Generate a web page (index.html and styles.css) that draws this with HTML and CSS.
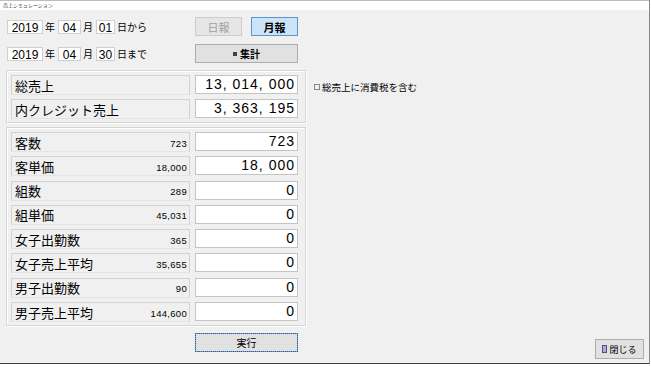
FILE: index.html
```html
<!DOCTYPE html>
<html lang="ja">
<head>
    <meta charset="UTF-8">
    <title>売上シミュレーション</title>
    <link rel="stylesheet" href="styles.css">
</head>
<body>
    <div class="janela">
        <div class="titulo">売上シミュレーション</div>

        <div class="conteudo">
            <div class="coluna-esq">
                <div class="datas">
                    <div class="campos-data">
                        <span class="caixa ano">2019</span><span class="unidade">年</span>
                        <span class="caixa mes">04</span><span class="unidade">月</span>
                        <span class="caixa dia">01</span><span class="unidade">日から</span>
                    </div>
                    <div class="botoes">
                        <button class="btn btn-pequeno desativado">日報</button>
                        <button class="btn btn-pequeno ativo">月報</button>
                    </div>
                    <div class="campos-data">
                        <span class="caixa ano">2019</span><span class="unidade">年</span>
                        <span class="caixa mes">04</span><span class="unidade">月</span>
                        <span class="caixa dia">30</span><span class="unidade">日まで</span>
                    </div>
                    <div class="botoes">
                        <button class="btn btn-largo"><span class="icone-quadrado"></span>集計</button>
                    </div>
                </div>

                <div class="grupo grupo-total">
                    <div class="linha">
                        <div class="rotulo">総売上</div>
                        <div class="valor">13, 014, 000</div>
                    </div>
                    <div class="linha">
                        <div class="rotulo">内クレジット売上</div>
                        <div class="valor">3, 363, 195</div>
                    </div>
                </div>

                <div class="grupo grupo-detalhe">
                    <div class="linha">
                        <div class="rotulo">客数<span class="ref">723</span></div>
                        <div class="valor">723</div>
                    </div>
                    <div class="linha">
                        <div class="rotulo">客単価<span class="ref">18,000</span></div>
                        <div class="valor">18, 000</div>
                    </div>
                    <div class="linha">
                        <div class="rotulo">組数<span class="ref">289</span></div>
                        <div class="valor">0</div>
                    </div>
                    <div class="linha">
                        <div class="rotulo">組単価<span class="ref">45,031</span></div>
                        <div class="valor">0</div>
                    </div>
                    <div class="linha">
                        <div class="rotulo">女子出勤数<span class="ref">365</span></div>
                        <div class="valor">0</div>
                    </div>
                    <div class="linha">
                        <div class="rotulo">女子売上平均<span class="ref">35,655</span></div>
                        <div class="valor">0</div>
                    </div>
                    <div class="linha">
                        <div class="rotulo">男子出勤数<span class="ref">90</span></div>
                        <div class="valor">0</div>
                    </div>
                    <div class="linha">
                        <div class="rotulo">男子売上平均<span class="ref">144,600</span></div>
                        <div class="valor">0</div>
                    </div>
                </div>

                <button class="btn btn-largo btn-executar">実行</button>
            </div>

            <div class="coluna-dir">
                <label class="opcao-imposto"><span class="check"></span>総売上に消費税を含む</label>
                <button class="btn btn-fechar">
                    <svg width="5" height="8" viewBox="0 0 5 8"><rect x="0.5" y="0.5" width="4" height="7" fill="#b9a6d6" stroke="#5b4a86"/></svg>
                    閉じる
                </button>
            </div>
        </div>
    </div>
</body>
</html>
```

FILE: styles.css
```css
body {
    margin: 0;
    padding: 0;
    background-color: #ffffff;
    font-family: "Liberation Sans", "Noto Sans CJK JP", sans-serif;
    color: #000;
}

.janela {
    width: 649px;
    height: 363px;
    background-color: #f0f0f0;
    border-right: 1px solid #8a8a8a;
    border-bottom: 1px solid #404040;
    display: flex;
    flex-direction: column;
}

.titulo {
    height: 9px;
    background: #ffffff;
    border-top: 1px solid #bdbdbd;
    font-size: 5px;
    line-height: 9px;
    padding-left: 3px;
    color: #444;
}

.conteudo {
    flex: 1;
    display: flex;
    padding: 7px 0 0 6px;
}

.coluna-esq {
    width: 300px;
    display: flex;
    flex-direction: column;
}

.coluna-dir {
    flex: 1;
    display: flex;
    flex-direction: column;
    padding-left: 7px;
    padding-right: 5px;
}

/* datas */
.datas {
    display: grid;
    grid-template-columns: 189px 103px;
    grid-auto-rows: 19px;
    row-gap: 8px;
}

.campos-data {
    display: flex;
    align-items: center;
    padding-left: 1px;
    font-size: 10px;
}

.caixa {
    height: 14px;
    line-height: 14px;
    background: #fff;
    border: 1px solid #cfcfcf;
    box-sizing: border-box;
    text-align: center;
    font-size: 12px;
}

.ano { width: 36px; }
.mes { width: 23px; }
.dia { width: 19px; }

.unidade {
    margin: 0 3px 0 2px;
}

.botoes {
    display: flex;
    gap: 9px;
}

.btn {
    font-family: "Liberation Sans", "Noto Sans CJK JP", sans-serif;
    background: #e1e1e1;
    border: 1px solid #adadad;
    color: #000;
    padding: 0;
    box-sizing: border-box;
    display: flex;
    align-items: center;
    justify-content: center;
}

.btn-pequeno {
    width: 47px;
    height: 19px;
    font-size: 11px;
    font-weight: bold;
}

.desativado {
    color: #a0a0a0;
    font-weight: normal;
    border-color: #cccccc;
    background: #e6e6e6;
}

.ativo {
    background: #cce4f7;
    border-color: #5b95d0;
}

.btn-largo {
    width: 103px;
    height: 19px;
    font-size: 10px;
    font-weight: bold;
}

.icone-quadrado {
    width: 4px;
    height: 4px;
    background: #444;
    margin-right: 3px;
}

/* grupos */
.grupo {
    border: 1px solid #d5d5d5;
    box-shadow: inset 1px 1px 0 #fff, 1px 1px 0 #fff;
    padding: 4px 7px 3px 4px;
    display: flex;
    flex-direction: column;
}

.grupo-total {
    margin-top: 7px;
    gap: 4px;
}

.grupo-total .linha {
    height: 20px;
}

.grupo-detalhe {
    margin-top: 4px;
    gap: 4.3px;
}

.grupo-detalhe .linha {
    height: 20px;
}

.linha {
    display: flex;
    gap: 5px;
}

.rotulo {
    width: 179px;
    box-sizing: border-box;
    border: 1px solid #d3d3d3;
    border-bottom-color: #e4e4e4;
    padding: 0 2px 0 3px;
    font-size: 13px;
    display: flex;
    align-items: center;
    justify-content: space-between;
}

.ref {
    font-size: 9.5px;
    letter-spacing: 0.3px;
    font-family: "Liberation Sans", sans-serif;
    padding-top: 2px;
}

.valor {
    width: 103px;
    height: 19px;
    box-sizing: border-box;
    background: #fff;
    border: 1px solid #c4c4c4;
    text-align: right;
    padding-right: 2px;
    font-size: 14px;
    letter-spacing: 1px;
    line-height: 17px;
}

.btn-executar {
    margin-top: 7px;
    margin-left: 189px;
    font-weight: normal;
    border: 1px solid #6b9fd6;
    outline: 1px dotted #2d5f96;
    outline-offset: -1px;
}

/* coluna direita */
.opcao-imposto {
    margin-top: 63px;
    font-size: 9.5px;
    display: flex;
    align-items: center;
    gap: 2px;
}

.check {
    width: 4px;
    height: 4px;
    border: 1px solid #888;
    margin-left: 1px;
}

.btn-fechar {
    margin-top: auto;
    margin-bottom: 4px;
    align-self: flex-end;
    width: 49px;
    height: 20px;
    font-size: 9px;
    gap: 2px;
}
```
